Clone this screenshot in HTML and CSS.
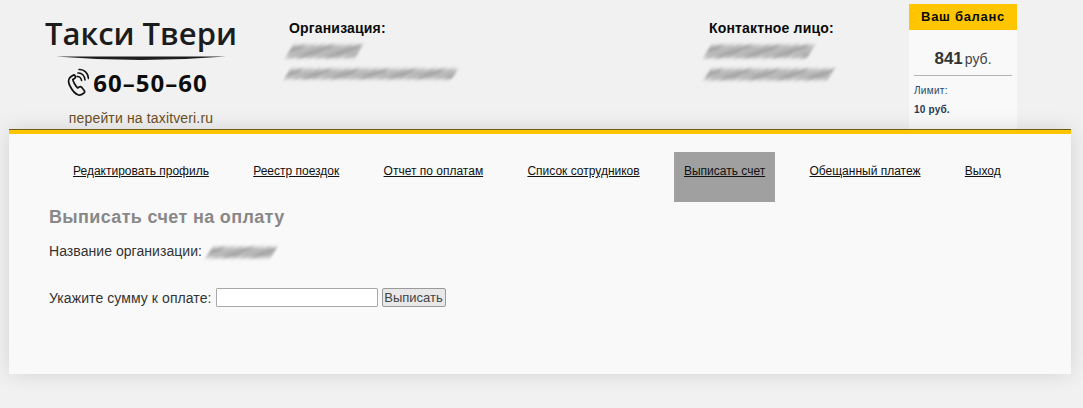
FILE: index.html
```html
<!DOCTYPE html>
<html lang="ru">
<head>
<meta charset="utf-8">
<title>Выписать счет</title>
<link rel="stylesheet" href="styles.css">
</head>
<body>
<header class="top">
  <div class="logo">
    <div class="logo-name">Такси Твери</div>
    <svg class="logo-line" width="170" height="4" viewBox="0 0 170 4"><path d="M0 0.4 H170 Q85 7.4 0 0.4Z" fill="#1e1e1e"/></svg>
    <div class="logo-phone">
      <svg class="phone-icon" width="22" height="31" viewBox="0 0 22 30" fill="none" stroke="#111" stroke-linecap="round">
        <path stroke-width="1.7" d="M6.5 8.5 L3.5 10.5 C1 12.5 1.2 16 3 19.5 C5 23.5 8 27.5 11.5 28.5 C13.5 29 15 28 17 26.5 C18 25.6 17.8 24.8 17 23.8 L14.8 21 C14 20 13 20 12 20.6 L10.8 21.4 C9.8 20.8 8.4 18.8 7.4 17 C6.4 15 5.6 13.6 5.8 13 L7.4 12 C8.4 11.3 8.8 10.6 8.2 9.6 C7.8 8.6 7.2 8 6.5 8.5Z"/>
        <path stroke-width="1.5" d="M10 10 C12 9.6 14 11.4 14.6 14"/>
        <path stroke-width="1.5" d="M11 6.6 C14.5 6 18 9.5 18 13.5"/>
        <path stroke-width="1.5" d="M12 3 C17 2.4 21.4 7 21.4 12"/>
      </svg>
      <span>60–50–60</span>
    </div>
    <a class="logo-link">перейти на taxitveri.ru</a>
  </div>
  <div class="info info-org">
    <div class="info-title">Организация:</div>
    <div class="smear smear-a"></div>
    <div class="smear smear-b"></div>
  </div>
  <div class="info info-contact">
    <div class="info-title">Контактное лицо:</div>
    <div class="smear smear-c"></div>
    <div class="smear smear-d"></div>
  </div>
  <aside class="balance">
    <div class="balance-head">Ваш баланс</div>
    <div class="balance-body">
      <div class="balance-sum"><b>841</b><span>руб.</span></div>
      <div class="balance-limit">Лимит:</div>
      <div class="balance-value">10 руб.</div>
    </div>
  </aside>
</header>
<main class="panel">
  <nav class="menu">
    <a class="menu-item" href="#">Редактировать профиль</a>
    <a class="menu-item" href="#">Реестр поездок</a>
    <a class="menu-item" href="#">Отчет по оплатам</a>
    <a class="menu-item" href="#">Список сотрудников</a>
    <a class="menu-item active" href="#">Выписать счет</a>
    <a class="menu-item" href="#">Обещанный платеж</a>
    <a class="menu-item" href="#">Выход</a>
  </nav>
  <section class="content">
    <h1 class="title">Выписать счет на оплату</h1>
    <div class="org-row">Название организации: <span class="smear smear-e"></span></div>
    <form class="pay-row">
      <label for="sum">Укажите сумму к оплате:</label>
      <input id="sum" class="pay-input" type="text">
      <button class="pay-btn" type="button">Выписать</button>
    </form>
  </section>
</main>
</body>
</html>
```
FILE: styles.css
```css
* { box-sizing: border-box; }
html, body { margin: 0; padding: 0; }
body {
  width: 1083px;
  height: 408px;
  overflow: hidden;
  background: #f1f1f1;
  font-family: "Liberation Sans", Arial, sans-serif;
  color: #333;
}
.top {
  display: flex;
  height: 129px;
  padding-left: 41px;
}
.logo {
  width: 200px;
  display: flex;
  flex-direction: column;
  align-items: center;
  padding-top: 13px;
}
.logo-name {
  font-family: "Open Sans", sans-serif;
  font-size: 31px;
  font-weight: 600;
  line-height: 40px;
  color: #1c1c1c;
}
.logo-line { display: block; margin-top: 3px; }
.logo-phone {
  display: flex;
  align-items: center;
  height: 30px;
  margin-top: 7px;
  padding-right: 7px;
  font-family: "Open Sans", sans-serif;
  font-weight: 700;
  font-size: 24px;
  color: #0c0c0c;
  letter-spacing: 1px;
}
.phone-icon { margin-right: 4px; margin-top: -2px; }
.logo-link {
  margin-top: 13px;
  font-size: 14px;
  line-height: 16px;
  letter-spacing: 0.15px;
  color: #6b4f24;
}
.info { padding-top: 20px; }
.info-org { width: 468px; padding-left: 48px; }
.info-contact { width: 200px; }
.info-title {
  font-size: 14px;
  line-height: 17px;
  font-weight: 700;
  color: #0a0a0a;
  letter-spacing: 0.17px;
}
.smear {
  display: block;
  filter: blur(1.7px);
  transform: skewX(-30deg);
  background: repeating-linear-gradient(155deg, #9a9a9a 0 2px, #cdcdcd 2px 4px, #858585 4px 6px, #bebebe 6px 9px, #919191 9px 10px, #d6d6d6 10px 12px);
}
.smear-a { width: 70px; height: 13px; margin: 8px 0 0 0; }
.smear-b { width: 168px; height: 10px; margin: 11px 0 0 -2px; }
.smear-c { width: 104px; height: 13px; margin: 8px 0 0 -2px; }
.smear-d { width: 124px; height: 11px; margin: 11px 0 0 -2px; }
.smear-e { display: inline-block; width: 65px; height: 11px; vertical-align: -2px; margin-left: 3px; }
.balance {
  width: 108px;
  margin-top: 4px;
  height: 126px;
  background: #f9f9f9;
}
.balance-head {
  height: 26px;
  background: #ffc600;
  color: #0a0a0a;
  font-weight: 700;
  font-size: 13px;
  line-height: 26px;
  letter-spacing: 0.7px;
  text-align: center;
}
.balance-body { padding: 0 5px; }
.balance-sum {
  height: 46px;
  padding-top: 18px;
  border-bottom: 1px solid #b4b4b4;
  text-align: center;
  font-size: 14px;
  line-height: 22px;
  color: #444;
}
.balance-sum b { font-size: 17px; color: #333; margin-right: 2px; }
.balance-limit {
  margin-top: 9px;
  font-size: 10px;
  line-height: 12px;
  letter-spacing: 0.3px;
  color: #1f4a6e;
}
.balance-value {
  margin-top: 7px;
  font-size: 10px;
  line-height: 12px;
  font-weight: 700;
  letter-spacing: 0.2px;
  color: #1d3c58;
}
.panel {
  position: relative;
  width: 1062px;
  height: 245px;
  margin-left: 9px;
  background: #f9f9f9;
  border-top: 1px solid #6e5c14;
  box-shadow: 0 0 20px rgba(0,0,0,0.12);
}
.panel::before {
  content: "";
  display: block;
  height: 4px;
  background: #ffc600;
}
.menu {
  display: flex;
  gap: 24.3px;
  padding: 18px 0 0 54px;
}
.menu-item {
  display: block;
  height: 50px;
  padding: 12px 10px 0;
  font-size: 12px;
  line-height: 14px;
  color: #111;
  text-decoration: underline;
}
.menu-item.active { background: #a0a0a0; }
.content { padding: 4px 40px 0; }
.title {
  margin: 0;
  font-size: 18px;
  line-height: 22px;
  font-weight: 700;
  letter-spacing: 0.35px;
  color: #888;
}
.org-row {
  margin-top: 14px;
  font-size: 14px;
  line-height: 18px;
  letter-spacing: 0.05px;
  color: #333;
}
.pay-row {
  display: flex;
  align-items: center;
  margin-top: 28px;
  font-size: 14px;
  letter-spacing: 0.08px;
  color: #333;
}
.pay-input {
  width: 162px;
  height: 19px;
  margin: 0 4px;
  padding: 0 2px;
  background: #fff;
  border: 1px solid #a9a9a9;
  border-radius: 1px;
}
.pay-btn {
  width: 64px;
  height: 19px;
  padding: 0;
  font: 13px "Liberation Sans", Arial, sans-serif;
  color: #444;
  background: #e8e8e8;
  border: 1px solid #9a9a9a;
  border-radius: 2px;
}
```
